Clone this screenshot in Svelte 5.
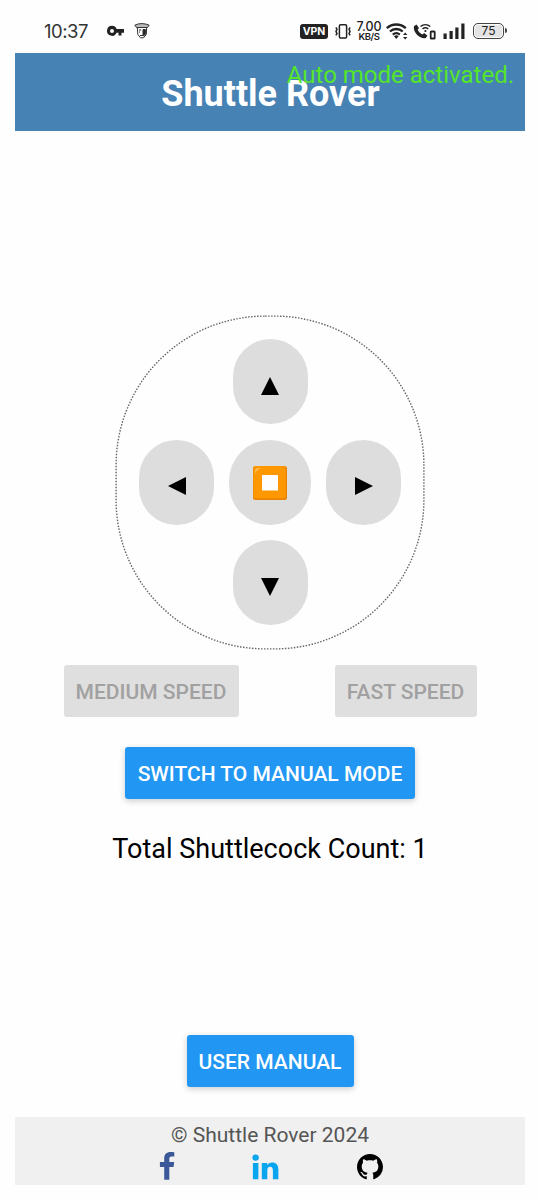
<script>
  const up = 'M9 0 18 18H0Z';
  const down = 'M0 0H18L9 18Z';
  const left = 'M0 9 18 0V18Z';
  const right = 'M0 0 18 9 0 18Z';
</script>

{#snippet arrow(d, label)}
  <button class="pad" aria-label={label}>
    <svg width="18" height="18" viewBox="0 0 18 18"><path {d} /></svg>
  </button>
{/snippet}

<div class="screen">
  <div class="status">
    <span class="time">10:37</span>
    <svg class="key" width="17" height="12" viewBox="0 0 17 12">
      <path fill-rule="evenodd" d="M5 .8a5 5 0 1 0 4.600 7h1.900v2.800h3V7.800H17V4H9.600A5 5 0 0 0 5 .8Zm0 3.200a2 2 0 1 1 0 4 2 2 0 0 1 0-4Z" />
    </svg>
    <svg class="cup" width="16" height="16" viewBox="0 0 16 16" fill="none" stroke="#333" stroke-width="1">
      <path d="M.8 2.200Q4 .5 8 .6T15.200 2.200L13.500 4.500H2.500Z" fill="#bbb" />
      <path d="M3.300 4.500 3.800 11.500 6.500 14.800h3l2.800-3.300.4-7" />
      <path d="M5 7h2.200M5 9h1M9 6.500h2.400v5L9 13z" fill="#222" />
      <path d="M6 12.500h3" />
    </svg>
    <span class="vpn">VPN</span>
    <svg class="vib" width="16" height="15" viewBox="0 0 16 15" fill="none" stroke="#222" stroke-width="1.500">
      <rect x="4.400" y=".8" width="7.200" height="13.200" rx="1.200" />
      <path d="M.8 3.500 2 5 1 7.400 2 9.600.8 11.400M15.200 3.500 14 5l1 2.400-1 2.200 1.200 1.800" />
    </svg>
    <span class="rate"><b>7.00</b><b class="unit">KB/S</b></span>
    <svg class="wifi" width="22" height="18" viewBox="0 0 22 18" fill="none" stroke="#222" stroke-width="2.300">
      <path d="M.8 6.200a14 14 0 0 1 19 0M3.900 9.500a9.500 9.500 0 0 1 12.800 0M6.800 12.600a5.400 5.400 0 0 1 7 0" />
      <path d="M8 14.200a3.700 3.700 0 0 1 4.600 0L10.300 17Z" fill="#222" stroke="none" />
      <path d="m17 13 2.200-2.500 2.200 2.500zm0 2 2.200 2.500 2.200-2.500z" fill="#222" stroke="none" />
    </svg>
    <svg class="call" width="24" height="17" viewBox="0 0 24 17" fill="none" stroke="#222">
      <path d="M1 3.300 3.500 1.600 6 5 4.700 6.800c1 2.200 2.400 3.700 4.700 4.700l1.800-1.400 3.300 2.600-2 2.500C6.800 16.200-.4 9.300 1 3.300Z" fill="#222" stroke="none" />
      <path d="M7.500 3.500a7.600 7.600 0 0 1 9.800 0M9.500 6a4.600 4.600 0 0 1 5.800 0" stroke-width="1.500" />
      <circle cx="12.400" cy="8" r="1.100" fill="#222" stroke="none" />
      <rect x="17.700" y="8.500" width="4" height="7" rx=".6" stroke-width="1.800" />
    </svg>
    <svg class="bars" width="23" height="16" viewBox="0 0 23 16">
      <path d="M.5 10.500h3.200V16H.5zM6.500 8h3.200v8H6.500zM12.300 4.500h3.200V16h-3.200zM18.300.5h3.200V16h-3.200z" />
    </svg>
    <span class="battery">75</span>
  </div>

  <header>
    <h1>Shuttle Rover</h1>
    <span class="toast">Auto mode activated.</span>
  </header>

  <main>
    <div class="dpad">
      <svg class="ring" width="310" height="335" viewBox="0 0 310 335">
        <rect x="1.100" y="1.100" width="307.800" height="332.800" rx="149" fill="none" stroke="#666" stroke-width="1.400" stroke-dasharray="1.500 1.500" />
      </svg>
      {@render arrow(up, 'Forward')}
      <div class="middle">
        {@render arrow(left, 'Left')}
        <button class="pad stop" aria-label="Stop">
          <svg width="34" height="34" viewBox="0 0 34 34">
            <rect width="34" height="34" rx="2.500" fill="#e88402" />
            <rect x=".4" width="32.300" height="32.300" rx="2.500" fill="#ff9800" />
            <path d="M2 8.500V5Q2.200 2 5 2h4.500Q3.500 2.500 2 8.500Z" fill="#ffbd52" />
            <rect x="9" y="9" width="16" height="15.500" fill="#fdfdfd" />
          </svg>
        </button>
        {@render arrow(right, 'Right')}
      </div>
      {@render arrow(down, 'Backward')}
    </div>

    <div class="speeds">
      <button class="btn off" disabled>MEDIUM SPEED</button>
      <button class="btn off fast" disabled>FAST SPEED</button>
    </div>
    <button class="btn mode">SWITCH TO MANUAL MODE</button>
    <p class="count">Total Shuttlecock Count: 1</p>
    <button class="btn manual">USER MANUAL</button>
  </main>

  <footer>
    <p>© Shuttle Rover 2024</p>
    <div class="links">
      <svg width="16" height="28" viewBox="0 0 16 28" fill="#3b5998">
        <path d="M15.300.2v4.400h-2.600c-2 0-2.400 1-2.400 2.400v3.100h4.900l-.65 4.900h-4.250V27.700H5.200V15H.9v-4.900h4.300V6.400C5.200 2.200 7.800 0 11.600 0c1.800 0 3.300.1 3.700.2Z" />
      </svg>
      <svg width="27" height="26" viewBox="0 0 27 26" fill="#0aa5ef">
        <circle cx="3.600" cy="3.600" r="3.200" />
        <path d="M.9 9h5.500v16.200H.9zM9.800 9h5.400v2.300c1-1.600 2.700-2.700 5.100-2.700 4 0 6.100 2.600 6.100 7.300v9.300h-5.500v-8.700c0-2.200-.8-3.700-2.700-3.700-2 0-2.900 1.500-2.900 3.700v8.700H9.800z" />
      </svg>
      <svg width="26" height="26" viewBox="0 0 16 16">
        <path d="M8 0C3.580 0 0 3.580 0 8c0 3.540 2.290 6.530 5.470 7.590.4.070.55-.17.55-.38 0-.19-.01-.82-.01-1.490-2.010.37-2.530-.49-2.690-.94-.09-.23-.48-.94-.82-1.130-.28-.15-.68-.52-.01-.53.63-.01 1.080.58 1.230.82.72 1.210 1.870.87 2.330.66.070-.52.280-.87.510-1.070-1.780-.2-3.640-.89-3.640-3.950 0-.87.310-1.590.82-2.150-.08-.2-.36-1.020.08-2.120 0 0 .67-.21 2.200.82.640-.18 1.320-.27 2-.27s1.360.09 2 .27c1.530-1.040 2.200-.82 2.200-.82.440 1.100.160 1.920.08 2.120.510.560.82 1.270.82 2.150 0 3.070-1.870 3.750-3.650 3.950.290.250.540.730.540 1.480 0 1.070-.01 1.930-.01 2.200 0 .210.150.460.550.380A8.010 8.010 0 0 0 16 8c0-4.420-3.580-8-8-8Z" />
      </svg>
    </div>
  </footer>
</div>

<style>
  :global(body) { background: #fefefe; }
  .screen {
    box-sizing: border-box;
    width: 540px;
    height: 1200px;
    padding: 0 15px 15px;
    display: flex;
    flex-direction: column;
    font-family: Roboto, "Noto Sans", sans-serif;
    color: #000;
    background: #fefefe;
    overflow: hidden;
  }
  button { border: 0; padding: 0; font-family: inherit; }
  p, h1 { margin: 0; white-space: nowrap; }
  svg { display: block; flex: none; }

  .status {
    height: 52.500px;
    padding: 10px 0 0 28px;
    box-sizing: border-box;
    display: flex;
    align-items: center;
    flex: none;
    fill: #222;
    color: #222;
  }
  .time { width: 64px; font: 18.500px/22px Inter, sans-serif; letter-spacing: -0.500px; color: #333; text-indent: 1px; }
  .key { margin-right: 10px; }
  .cup { margin-right: 150px; }
  .vpn {
    width: 28px;
    height: 15px;
    border-radius: 3px;
    background: #222;
    color: #fff;
    font: bold 10.500px/15px Inter, sans-serif;
    text-align: center;
    margin-right: 7px;
  }
  .vib { margin-right: 5px; }
  .rate { width: 26px; display: flex; flex-direction: column; align-items: center; margin-right: 4px; }
  .rate b { font: 500 12.500px/11px Inter, sans-serif; letter-spacing: -0.100px; }
  .rate .unit { font-size: 9.500px; line-height: 9px; letter-spacing: -0.400px; font-weight: 600; }
  .wifi { margin-right: 5px; }
  .call { margin-right: 6px; }
  .bars { margin-right: 7px; }
  .battery {
    position: relative;
    box-sizing: border-box;
    width: 31px;
    height: 16px;
    border: 1.500px solid #444;
    border-radius: 5px;
    background: #e4e4e4;
    box-shadow: inset 0 0 0 1px #fff;
    font: 12px/14px Inter, sans-serif;
    text-align: center;
  }
  .battery::after {
    content: "";
    position: absolute;
    right: -4px;
    top: 4px;
    width: 2px;
    height: 5px;
    background: #444;
    border-radius: 0 2px 2px 0;
  }

  header {
    position: relative;
    height: 78.500px;
    flex: none;
    background: #4682b4;
    display: flex;
    justify-content: center;
    align-items: center;
  }
  h1 { font-size: 36px; font-weight: 700; line-height: 42px; color: #fff; padding: 4px 0 0 1px; }
  .toast {
    position: absolute;
    right: 11px;
    top: 8px;
    font-size: 24px;
    line-height: 29px;
    color: #55e52b;
    white-space: nowrap;
  }

  main { flex: 1; display: flex; flex-direction: column; align-items: center; }
  .dpad {
    position: relative;
    box-sizing: border-box;
    margin-top: 184px;
    width: 310px;
    height: 335px;
    padding: 24px 0;
    display: flex;
    flex-direction: column;
    align-items: center;
    gap: 15.500px;
  }
  .ring { position: absolute; left: 0; top: 0; }
  .middle { display: flex; gap: 15px; }
  .pad {
    width: 75px;
    height: 85px;
    padding-top: 8px;
    border-radius: 37.500px;
    background: #ddd;
    display: flex;
    align-items: center;
    justify-content: center;
  }
  .pad.stop { width: 82px; padding-top: 2px; border-radius: 41px; }

  .btn {
    height: 52px;
    border-radius: 3px;
    background: #2196f3;
    color: #fff;
    font-size: 21px;
    font-weight: 500;
    line-height: 52px;
    padding-top: 1px;
    white-space: nowrap;
    box-shadow: 0 2px 6px rgb(0 0 0 / 0.2);
  }
  .speeds { margin-top: 15px; width: 413px; display: flex; justify-content: space-between; }
  .off { width: 175px; background: #dfdfdf; color: #a1a1a1; box-shadow: none; }
  .fast { width: 142px; }
  .mode { width: 290px; margin-top: 30px; }
  .count { margin-top: 33px; font-size: 27px; line-height: 34px; }
  .manual { width: 167px; margin-top: 169px; }

  footer {
    height: 68px;
    flex: none;
    background: #f0f0f0;
    display: flex;
    flex-direction: column;
    align-items: center;
  }
  footer p { margin-top: 6px; font-size: 21px; line-height: 25px; color: #555; }
  .links { margin: 4px 0 0 1px; width: 224px; display: flex; align-items: center; justify-content: space-between; }
  .links svg + svg { margin-top: 2px; }
</style>
